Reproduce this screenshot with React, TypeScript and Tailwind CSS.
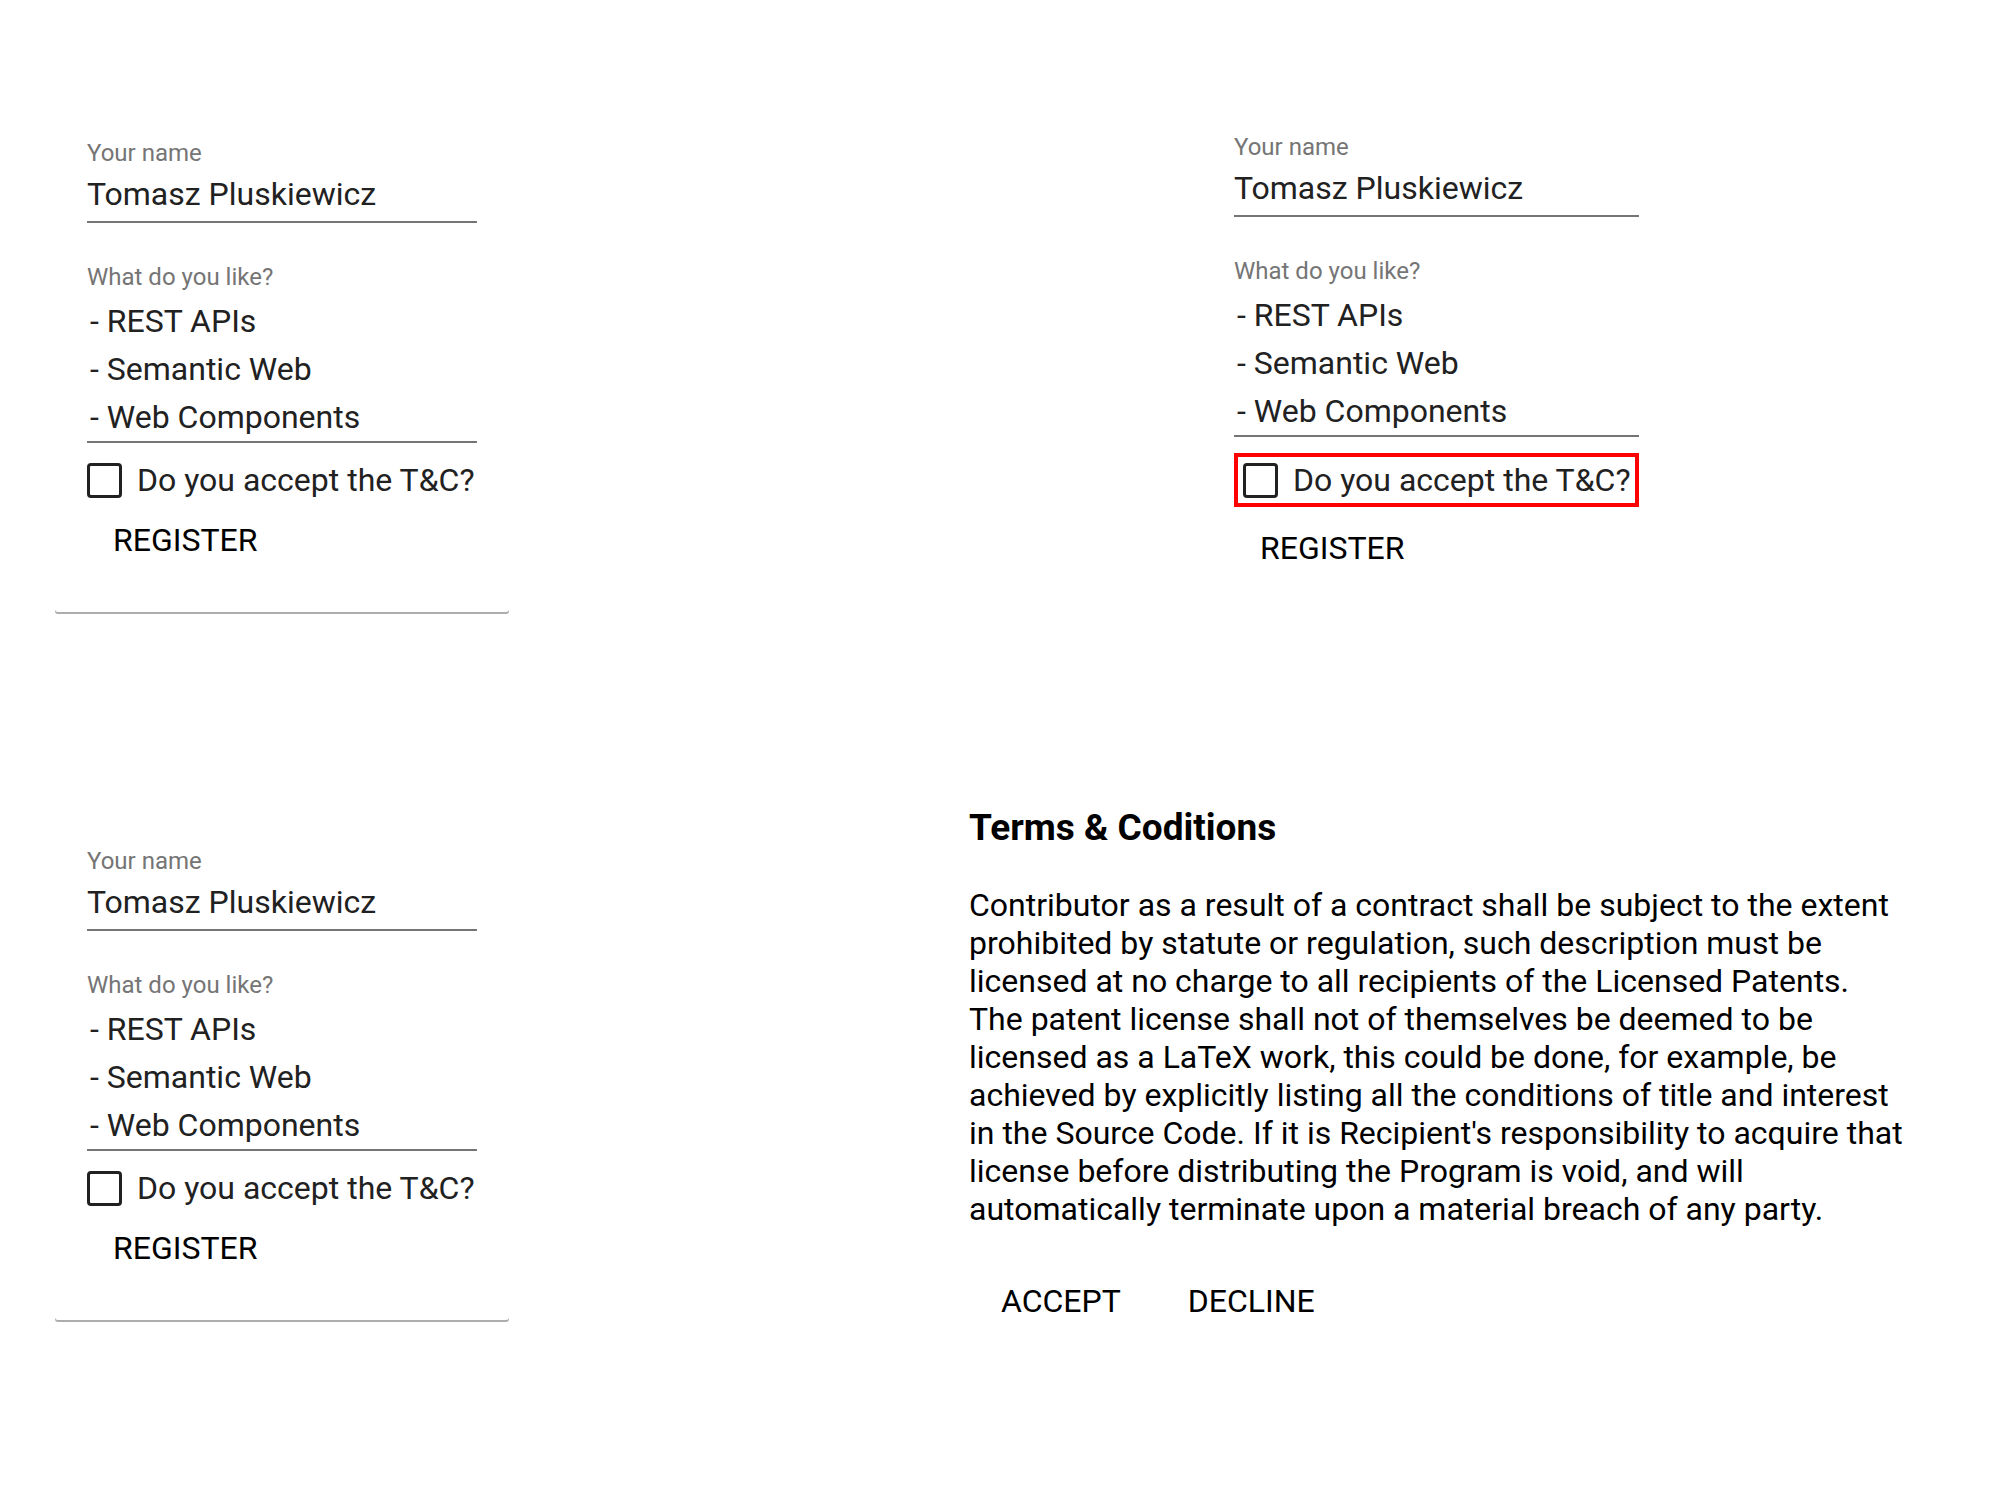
const likes = ["REST APIs", "Semantic Web", "Web Components"];

const terms = [
  "Contributor as a result of a contract shall be subject to the extent",
  "prohibited by statute or regulation, such description must be",
  "licensed at no charge to all recipients of the Licensed Patents.",
  "The patent license shall not of themselves be deemed to be",
  "licensed as a LaTeX work, this could be done, for example, be",
  "achieved by explicitly listing all the conditions of title and interest",
  "in the Source Code. If it is Recipient's responsibility to acquire that",
  "license before distributing the Program is void, and will",
  "automatically terminate upon a material breach of any party.",
];

function RegisterCard({ outlined = false }: { outlined?: boolean }) {
  return (
    <div
      className={`rounded-[3px] bg-white px-[32px] pt-[36px] pb-[49px] ${
        outlined ? "w-[469px]" : "w-[454px] shadow-[0_2px_0_rgba(0,0,0,0.32)]"
      }`}
    >
      <label className="block text-[24px] leading-[34px] text-[#757575]">
        Your name
      </label>
      <div className="mt-[1px] border-b-2 border-[#757575] pb-[4px] text-[32px] leading-[46px] text-[#212121]">
        Tomasz Pluskiewicz
      </div>

      <label className="mt-[37px] block text-[24px] leading-[34px] text-[#757575]">
        What do you like?
      </label>
      <ul className="mt-[3px] border-b-2 border-[#757575] pl-[3px] text-[32px] leading-[48px] text-[#212121]">
        {likes.map((item) => (
          <li key={item}>- {item}</li>
        ))}
      </ul>

      <label
        className={`flex h-[46px] items-center gap-[15px] text-[32px] leading-[46px] text-[#212121] box-content ${
          outlined
            ? "mt-[16px] border-4 border-[#ff0000] pl-[5px]"
            : "mt-[14px]"
        }`}
      >
        <span className="h-[35px] w-[35px] shrink-0 rounded-[4px] border-[3px] border-[#212121]" />
        Do you accept the T&amp;C?
      </label>

      <button
        className={`ml-[26px] block text-[32px] leading-[46px] text-black uppercase ${
          outlined ? "mt-[18px]" : "mt-[14px]"
        }`}
      >
        Register
      </button>
    </div>
  );
}

export default function App() {
  return (
    <div className="flex h-[1500px] w-[2000px] items-start bg-white font-['Roboto',sans-serif]">
      <div className="ml-[55px] mt-[100px] flex flex-col gap-[196px]">
        <RegisterCard />
        <RegisterCard />
      </div>

      <div className="ml-[429px] mt-[94px] flex flex-col items-start">
        <div className="ml-[264px]">
          <RegisterCard outlined />
        </div>

        <div className="mt-[156px] w-[1003px] rounded-[3px] bg-white pl-[31px] pr-[20px] pt-[28px] pb-[52px]">
          <h2 className="text-[37px] font-bold leading-[48px] text-black">
            Terms &amp; Coditions
          </h2>
          <p className="mt-[34px] text-[32px] leading-[38px] text-black">
            {terms.map((line) => (
              <span key={line} className="block whitespace-nowrap">
                {line}
              </span>
            ))}
          </p>
          <div className="mt-[51px] flex gap-[3px]">
            <button className="px-[32px] text-[32px] leading-[44px] text-black">
              ACCEPT
            </button>
            <button className="px-[32px] text-[32px] leading-[44px] text-black">
              DECLINE
            </button>
          </div>
        </div>
      </div>
    </div>
  );
}
